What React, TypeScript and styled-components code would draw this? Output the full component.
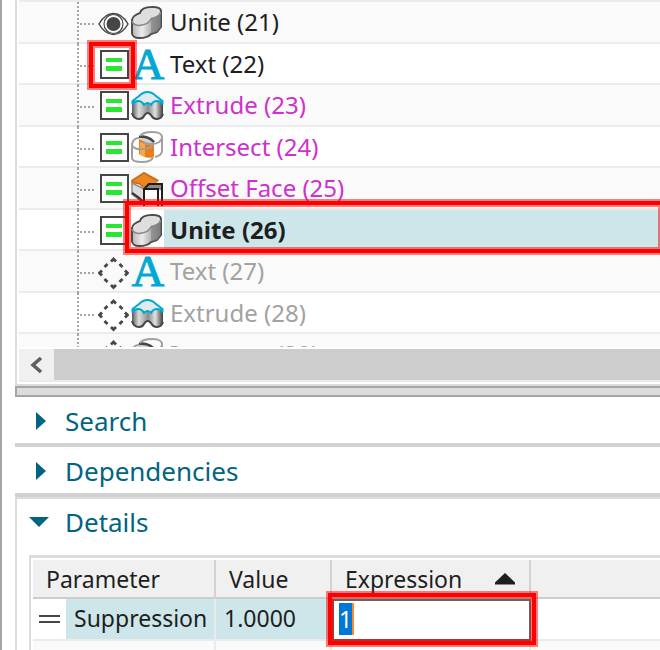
import React, { useEffect, useRef, useState } from "react";
import styled, { createGlobalStyle } from "styled-components";

const GlobalStyle = createGlobalStyle`
  * { box-sizing: border-box; }
  body {
    margin: 0;
    background: #fff;
    overflow: hidden;
    font-family: "Noto Sans", "Open Sans", sans-serif;
    color: #1e1e1e;
  }
`;

const Window = styled.main`
  min-height: 100vh;
  padding-left: 13px;
  border-left: 2px solid #a5a5a5;
`;

const TreePanel = styled.section`
  padding: 0 0 2px 2px;
  border-left: 2px solid #dcdcdc;
  border-bottom: 2px solid #dcdcdc;
`;

const Tree = styled.ul`
  height: 347px;
  margin: 0 0 2px;
  padding: 0;
  list-style: none;
  overflow: hidden;
  border-top: 2px solid #ebebeb;
`;

const Row = styled.li`
  position: relative;
  display: flex;
  height: 41px;
  padding-left: 58px;
  background: linear-gradient(#ebebeb, #ebebeb) bottom / 100% 2px no-repeat #fff;

  &:nth-child(odd) {
    height: 42px;
    background-color: #fafafa;
  }
`;

const Spine = styled.span`
  width: 2px;
  background: repeating-linear-gradient(#a5a5a5 0 2px, transparent 2px 4px);
`;

const Branch = styled.span`
  width: 15px;
  height: 2px;
  margin: 21px 3px 0 1px;
  background: repeating-linear-gradient(90deg, #a5a5a5 0 2px, transparent 2px 4px);
`;

const StatusButton = styled.button`
  display: block;
  width: 31px;
  height: 39px;
  margin: 0 2px 0 0;
  padding: 0;
  border: 0;
  background: none;

  svg { display: block; }
`;

const FeatureIcon = styled.span<{ $selected?: boolean }>`
  width: 33px;
  height: 39px;
  background: ${(p) => (p.$selected ? "#fff" : "transparent")};

  svg { display: block; overflow: visible; }
`;

type Tone = "normal" | "changed" | "muted" | "selected";
const toneColor: Record<Tone, string> = {
  normal: "#1e1e1e",
  changed: "#cd32cd",
  muted: "#a2a2a2",
  selected: "#1e1e1e",
};

const Label = styled.span<{ $tone: Tone }>`
  flex: 1;
  height: 39px;
  padding-left: 6px;
  font-size: 24px;
  line-height: 39px;
  white-space: nowrap;
  color: ${(p) => toneColor[p.$tone]};
  font-weight: ${(p) => (p.$tone === "selected" ? 700 : 400)};
  background: ${(p) => (p.$tone === "selected" ? "#cde6ea" : "transparent")};
`;

const Callout = styled.span`
  position: absolute;
  z-index: 2;
  border: 4px solid #f00;
  box-shadow: 0 0 0 2px rgba(255, 0, 0, 0.5), inset 0 0 0 2px rgba(255, 0, 0, 0.5);
  pointer-events: none;
`;

const StatusCallout = styled(Callout)`
  top: -2px;
  left: 70px;
  width: 46px;
  height: 46px;
`;

const RowCallout = styled(Callout)`
  top: -9px;
  left: 106px;
  right: -4px;
  height: 52px;
`;

const FieldCallout = styled(Callout)`
  inset: -6px -5px -4px -4px;
`;

const ScrollBar = styled.div`
  display: flex;
  height: 33px;
  border-bottom: 2px solid #ebebeb;
`;

const ScrollButton = styled.button`
  width: 35px;
  padding: 0;
  border: 0;
  background: #f0f0f0;

  svg { display: block; margin-left: 10px; }
`;

const ScrollThumb = styled.div`
  flex: 1;
  background: #cdcdcd;
`;

const Splitter = styled.div`
  height: 11px;
  border: 2px solid #a5a5a5;
  border-right: 0;
  background: #dcdcdc;
`;

const SectionButton = styled.button`
  display: grid;
  grid-template-columns: 50px 1fr;
  align-items: center;
  width: 100%;
  height: 50px;
  padding: 2px 0 0;
  border: 0;
  border-bottom: 4px solid #d2d2d2;
  background: none;
  font: inherit;
  font-size: 26px;
  line-height: 36px;
  text-align: left;
  color: #006482;

  svg { display: block; margin-left: 11px; }
`;

const DetailsSection = styled.section`
  padding-left: 12px;
  border-left: 2px solid #dcdcdc;
  border-top: 2px solid #dcdcdc;

  > ${SectionButton} {
    width: calc(100% + 14px);
    height: 44px;
    margin: 0 0 12px -14px;
    border: 0;
  }
`;

const TableFrame = styled.div`
  padding: 2px 0 0 2px;
  border-left: 2px solid #dcdcdc;
  border-top: 3px solid #dcdcdc;
`;

const Table = styled.table`
  width: 100%;
  table-layout: fixed;
  border-collapse: separate;
  border-spacing: 0;
  font-size: 23px;
  line-height: 36px;
  white-space: nowrap;
`;

const Head = styled.th`
  height: 39px;
  padding: 0 0 0 13px;
  border-right: 2px solid #d2d2d2;
  border-bottom: 2px solid #cdcdcd;
  background: #f0f0f0;
  font-weight: 400;
  text-align: left;

  &:last-child { border-right: 0; }
`;

const SortLabel = styled.span`
  display: flex;
  align-items: center;
  justify-content: space-between;
  padding-right: 14px;
`;

const Cell = styled.td<{ $filled?: boolean; $flush?: boolean }>`
  position: relative;
  height: 42px;
  padding: ${(p) => (p.$flush ? "0" : "0 0 2px 8px")};
  border-right: ${(p) => (p.$filled ? "2px solid #ebebeb" : "0")};
  border-bottom: 2px solid #ebebeb;
  background: ${(p) => (p.$filled ? "#cde6ea" : "#fff")};
`;

const EmptyCell = styled.td`
  height: 10px;
  padding: 0;
  border-right: 2px solid #ebebeb;
  background: #fafafa;

  &:last-child { border-right: 0; }
`;

const FieldWrap = styled.div`
  position: relative;
  height: 42px;
  margin-bottom: -2px;

  &::after {
    content: "";
    position: absolute;
    top: 4px;
    left: 20px;
    width: 2px;
    height: 32px;
    background: #ff8728;
  }
`;

const Field = styled.input`
  display: block;
  width: 100%;
  height: 42px;
  padding: 0 0 2px 5px;
  border: 2px solid #646464;
  border-radius: 0;
  outline: 0;
  background: #fff;
  font: inherit;
  color: #1e1e1e;

  &::selection { background: #0078d7; color: #fff; }
`;

type Status = "visible" | "suppressed" | "inactive";

function StatusGlyph({ status }: { status: Status }) {
  if (status === "visible")
    return (
      <svg width="31" height="39" viewBox="0 0 31 39" fill="none" stroke="#464646">
        <path d="M1 22C5 15 10 11.500 15.500 11.500S26 15 30 22C26 29 21 32.500 15.500 32.500S5 29 1 22Z" fill="#fff" strokeWidth="1.500" />
        <circle cx="15.500" cy="22" r="9.500" strokeWidth="1.200" />
        <circle cx="15.500" cy="22" r="7" fill="#464646" stroke="none" />
      </svg>
    );
  if (status === "suppressed")
    return (
      <svg width="31" height="39" viewBox="0 0 31 39">
        <rect x="3" y="7" width="27" height="27" fill="#fff" stroke="#464646" strokeWidth="2" />
        <path d="M8 14h16v4H8zM8 22h16v5H8z" fill="#28e632" />
      </svg>
    );
  return (
    <svg width="31" height="39" viewBox="0 0 31 39" fill="none" stroke="#464646" strokeWidth="2.800">
      <path d="M13 10.500L15.500 8L18 10.500M13 34L15.500 36.500L18 34M4 19.500L1.500 22L4 24.500M27 19.500L29.500 22L27 24.500M6.500 16L9.500 13M21.500 13L24.500 16M6.500 28L9.500 31M21.500 31L24.500 28" />
    </svg>
  );
}

type Feature = "unite" | "text" | "extrude" | "intersect" | "offset";

function FeatureGlyph({ feature }: { feature: Feature }) {
  switch (feature) {
    case "unite":
      return (
        <svg width="33" height="39" viewBox="0 0 33 39">
          <defs>
            <linearGradient id="solid" x1="0" x2="1">
              <stop offset="0" stopColor="#b4b4b4" />
              <stop offset=".35" stopColor="#ececec" />
              <stop offset=".6" stopColor="#bdbdbd" />
              <stop offset="1" stopColor="#777" />
            </linearGradient>
          </defs>
          <path d="M1 18C2 14 6 12 9 11C10 7 15 5 21 5C27 5 30 7 30 9V25L26 30L20 32C17 36 12 36 8 36C4 36 1 34 1 31Z" fill="url(#solid)" stroke="#4b4b4b" strokeWidth="2" strokeLinejoin="round" />
          <path d="M2 18C3 14 7 13 10 12C11 8 16 6 21 6C26 6 29 7 29 9C29 13 24 15 20 15C20 20 16 23 10 23C5 23 2 21 2 18Z" fill="#dedede" />
          <path d="M1 19C2 23 7 24 11 23C17 22 18 20 20 17C25 17 29 14 30 10" fill="none" stroke="#888" strokeWidth="1.500" />
          <path d="M20 17L30 12V25L26 30L20 32Z" fill="#808080" opacity=".6" />
        </svg>
      );
    case "text":
      return (
        <svg width="33" height="39" viewBox="0 0 33 39">
          <text x="17" y="35" textAnchor="middle" fontFamily="Liberation Serif, serif" fontSize="45" fill="#00a8d2" stroke="#00a8d2" strokeWidth="1">A</text>
        </svg>
      );
    case "extrude":
      return (
        <svg width="33" height="39" viewBox="0 0 33 39">
          <defs>
            <linearGradient id="folds" x1="0" x2="1">
              <stop offset="0" stopColor="#5a5a5a" />
              <stop offset=".22" stopColor="#dcdcdc" />
              <stop offset=".42" stopColor="#aaa" />
              <stop offset=".52" stopColor="#8c8c8c" />
              <stop offset=".75" stopColor="#e1e1e1" />
              <stop offset="1" stopColor="#3c3c3c" />
            </linearGradient>
          </defs>
          <path d="M1 17H32V29C31 32 29 34 26 34C23 34 21 32 20 30C19 29 18 28 17 28C15 28 14 29 13 31C12 33 10 34 8 34C5 34 2 32 1 29Z" fill="url(#folds)" />
          <path d="M1 28C2 32 5 34 8 34C10 34 12 33 13 31C14 29 15 28 17 28C18 28 19 29 20 30C21 32 23 34 26 34C29 34 31 32 32 29" fill="none" stroke="#464646" strokeWidth="2" />
          <path d="M1.500 19V16L8 11C11 8 14 7 16.500 7C19 7 22 8 25 11L31.500 16V19C30 17 28 16 26 16C23 16 21 18 20 20C19 18 18 18 16.500 18C15 18 14 18 13 20C12 18 10 16 7 16C5 16 3 17 1.500 19Z" fill="#e1eaed" stroke="#00a8d2" strokeWidth="2" strokeLinejoin="round" />
        </svg>
      );
    case "intersect":
      return (
        <svg width="33" height="39" viewBox="0 0 33 39">
          <path d="M8 12C12 14 18 15 23 15V29C21 32 13 31 8 27Z" fill="#eb7d19" />
          <path d="M9 15L14 17V30L9 27Z" fill="#f5aa46" />
          <path d="M9 11C12 9 17 9 23 14L22 17C17 16 12 15 9 11Z" fill="#d2d2d2" />
          <path d="M8 10C12 9 19 10 23 15" fill="none" stroke="#464646" strokeWidth="2.500" />
          <g fill="none" stroke="#a0a0a0" strokeWidth="2">
            <path d="M9 9C11 6 16 5 21 5C27 5 31 7 31 10V24C31 27 28 29 24 30M31 11C30 15 26 17 20 17C16 17 13 16 12 15" />
            <path d="M1 17C2 13 5 11 8 11M1 16V31C1 34 5 35 11 35C16 35 21 34 22 30M1 18C2 21 7 23 12 22C18 22 21 20 22 17" />
          </g>
        </svg>
      );
    default:
      return (
        <svg width="33" height="39" viewBox="0 0 33 39">
          <path d="M1 15L13 21V35L1 26Z" fill="#dcdcdc" stroke="#8c8c8c" strokeWidth="1.500" />
          <path d="M1 25L8 30L13 35" fill="none" stroke="#3c3c3c" strokeWidth="2.500" />
          <path d="M0 12L13 4L28 12L24 17H17L12 20L9 16L0 15Z" fill="#eb871e" />
          <path d="M1 13L13 5L27 13M1 14L9 16L12 19" fill="none" stroke="#be6e28" strokeWidth="1.500" />
          <path d="M13 21L18 16H31V38H13Z" fill="#fff" />
          <path d="M13 21L18 16H31V23L27 21Z" fill="#8c8c8c" />
          <path d="M13 38V21L18 16H31V38M14 21H27V38" fill="none" stroke="#1e1e1e" strokeWidth="2" />
        </svg>
      );
  }
}

interface Item {
  name: string;
  status: Status;
  feature: Feature;
  tone: Tone;
  flagged?: boolean;
}

const items: Item[] = [
  { name: "Unite (21)", status: "visible", feature: "unite", tone: "normal" },
  { name: "Text (22)", status: "suppressed", feature: "text", tone: "normal", flagged: true },
  { name: "Extrude (23)", status: "suppressed", feature: "extrude", tone: "changed" },
  { name: "Intersect (24)", status: "suppressed", feature: "intersect", tone: "changed" },
  { name: "Offset Face (25)", status: "suppressed", feature: "offset", tone: "changed" },
  { name: "Unite (26)", status: "suppressed", feature: "unite", tone: "selected" },
  { name: "Text (27)", status: "inactive", feature: "text", tone: "muted" },
  { name: "Extrude (28)", status: "inactive", feature: "extrude", tone: "muted" },
  { name: "Intersect (29)", status: "inactive", feature: "intersect", tone: "muted" },
];

function SectionHeader({ title, open = false }: { title: string; open?: boolean }) {
  return (
    <SectionButton type="button" aria-expanded={open}>
      <svg width="26" height="24" viewBox="0 0 26 24" aria-hidden="true">
        <path d={open ? "M3 7H23L13 17Z" : "M10 3L20 12L10 21Z"} fill="#006482" />
      </svg>
      {title}
    </SectionButton>
  );
}

export default function App() {
  const [expression, setExpression] = useState("1");
  const field = useRef<HTMLInputElement>(null);

  useEffect(() => {
    field.current?.focus({ preventScroll: true });
    field.current?.select();
  }, []);

  return (
    <>
      <GlobalStyle />
      <Window>
        <TreePanel aria-label="Features">
          <Tree>
            {items.map((item) => (
              <Row key={item.name}>
                <Spine />
                <Branch />
                <StatusButton type="button" aria-label={`${item.name} ${item.status}`}>
                  <StatusGlyph status={item.status} />
                </StatusButton>
                <FeatureIcon $selected={item.tone === "selected"} aria-hidden="true">
                  <FeatureGlyph feature={item.feature} />
                </FeatureIcon>
                <Label $tone={item.tone}>{item.name}</Label>
                {item.flagged && <StatusCallout />}
                {item.tone === "selected" && <RowCallout />}
              </Row>
            ))}
          </Tree>
          <ScrollBar>
            <ScrollButton type="button" aria-label="Scroll left">
              <svg width="14" height="16" viewBox="0 0 14 16" aria-hidden="true">
                <path d="M12 1L4 8L12 15" fill="none" stroke="#5f5f5f" strokeWidth="3.500" />
              </svg>
            </ScrollButton>
            <ScrollThumb />
          </ScrollBar>
        </TreePanel>
        <Splitter />
        <SectionHeader title="Search" />
        <SectionHeader title="Dependencies" />
        <DetailsSection>
          <SectionHeader title="Details" open />
          <TableFrame>
            <Table>
              <colgroup>
                <col style={{ width: 33 }} />
                <col style={{ width: 150 }} />
                <col style={{ width: 116 }} />
                <col style={{ width: 199 }} />
                <col />
              </colgroup>
              <thead>
                <tr>
                  <Head colSpan={2} scope="col">Parameter</Head>
                  <Head scope="col">Value</Head>
                  <Head scope="col" id="expression" aria-sort="ascending">
                    <SortLabel>
                      Expression
                      <svg width="20" height="12" viewBox="0 0 20 12" aria-hidden="true">
                        <path d="M0 11.500V9.500L10 0L20 9.500V11.500Z" fill="#1e1e1e" />
                      </svg>
                    </SortLabel>
                  </Head>
                  <Head aria-hidden="true" />
                </tr>
              </thead>
              <tbody>
                <tr>
                  <Cell $flush>
                    <svg width="28" height="10" viewBox="0 0 28 10" display="block" aria-hidden="true">
                      <path d="M6 2h21M6 8h21" stroke="#464646" strokeWidth="2" />
                    </svg>
                  </Cell>
                  <Cell $filled>Suppression</Cell>
                  <Cell $filled>1.0000</Cell>
                  <Cell $flush>
                    <FieldWrap>
                      <Field
                        ref={field}
                        aria-labelledby="expression"
                        value={expression}
                        onChange={(e) => setExpression(e.target.value)}
                      />
                      <FieldCallout />
                    </FieldWrap>
                  </Cell>
                  <Cell />
                </tr>
                <tr>
                  <EmptyCell colSpan={2} />
                  <EmptyCell />
                  <EmptyCell />
                  <EmptyCell />
                </tr>
              </tbody>
            </Table>
          </TableFrame>
        </DetailsSection>
      </Window>
    </>
  );
}
